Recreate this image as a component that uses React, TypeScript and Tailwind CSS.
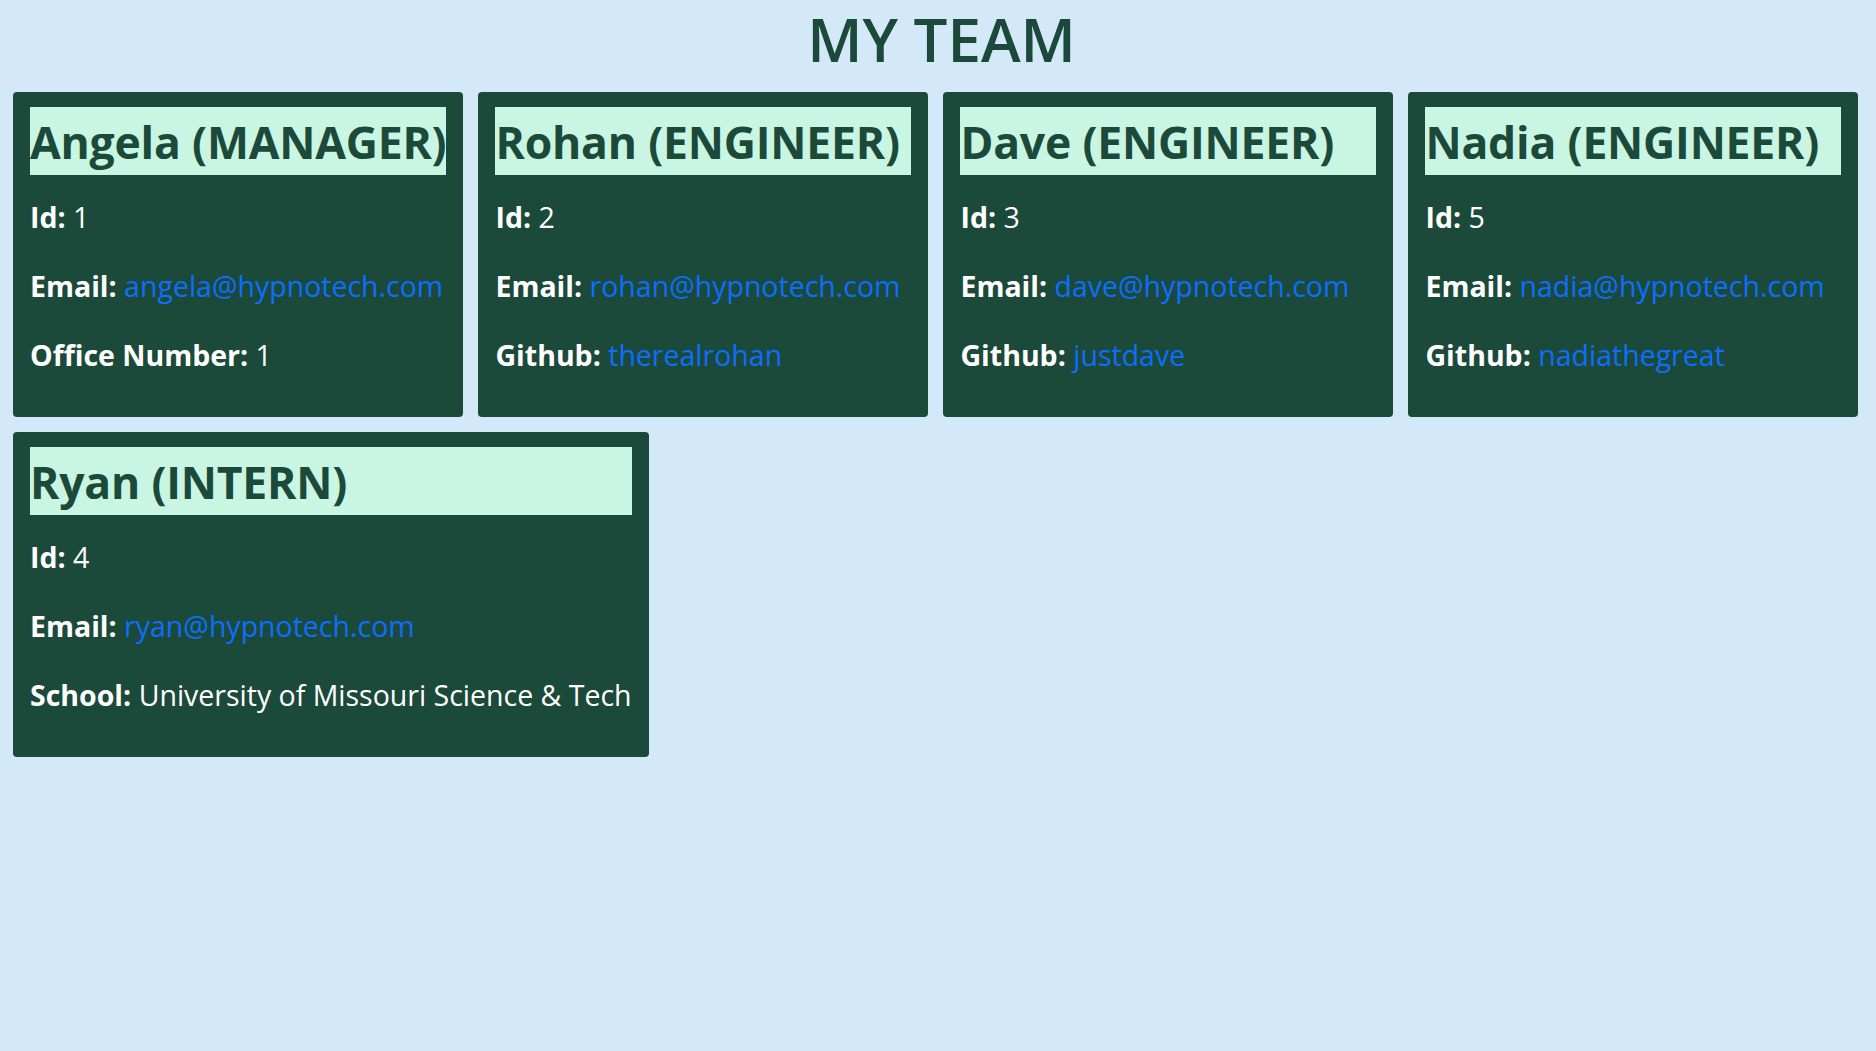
const TEAM = [
  {
    name: "Angela",
    role: "MANAGER",
    id: 1,
    email: "angela@hypnotech.com",
    extra: { label: "Office Number", value: "1" },
  },
  {
    name: "Rohan",
    role: "ENGINEER",
    id: 2,
    email: "rohan@hypnotech.com",
    extra: { label: "Github", value: "therealrohan", link: true },
  },
  {
    name: "Dave",
    role: "ENGINEER",
    id: 3,
    email: "dave@hypnotech.com",
    extra: { label: "Github", value: "justdave", link: true },
  },
  {
    name: "Nadia",
    role: "ENGINEER",
    id: 5,
    email: "nadia@hypnotech.com",
    extra: { label: "Github", value: "nadiathegreat", link: true },
  },
  {
    name: "Ryan",
    role: "INTERN",
    id: 4,
    email: "ryan@hypnotech.com",
    extra: { label: "School", value: "University of Missouri Science & Tech" },
  },
];

type Member = (typeof TEAM)[number];

function MemberCard({ member }: { member: Member }) {
  const { extra } = member;
  return (
    <div className="min-w-[450px] rounded-[4px] bg-[#1c4a3a] px-[17px] pt-[15px] pb-[27px] text-white">
      <h2 className="h-[68px] whitespace-nowrap bg-[#c9f5e3] text-[44.5px] font-bold leading-[70px] tracking-[-0.2px] text-[#1c4a3a]">
        {member.name} ({member.role})
      </h2>
      <div className="mt-[8px] whitespace-nowrap text-[28.5px] leading-[69px]">
        <p>
          <span className="font-bold">Id:</span> {member.id}
        </p>
        <p>
          <span className="font-bold">Email:</span>{" "}
          <a href={`mailto:${member.email}`} className="text-[#0d6efd]">
            {member.email}
          </a>
        </p>
        <p>
          <span className="font-bold">{extra.label}:</span>{" "}
          {"link" in extra && extra.link ? (
            <a href="#" className="text-[#0d6efd]">
              {extra.value}
            </a>
          ) : (
            extra.value
          )}
        </p>
      </div>
    </div>
  );
}

export default function App() {
  return (
    <div className="min-h-screen bg-[#d3e9f7] font-['Open_Sans',sans-serif]">
      <h1 className="pt-[1px] pl-[7px] text-center text-[60px] font-semibold leading-[76px] text-[#1c4a3a]">MY TEAM</h1>
      <div className="mt-[15px] flex flex-wrap gap-x-[15px] gap-y-[15px] px-[13px]">
        {TEAM.map((m) => (
          <MemberCard key={m.id} member={m} />
        ))}
      </div>
    </div>
  );
}
